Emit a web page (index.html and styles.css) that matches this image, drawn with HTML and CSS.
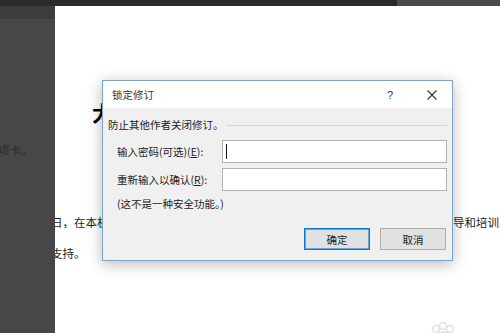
FILE: index.html
```html
<!DOCTYPE html>
<html>
<head>
	<meta charset="utf-8">
	<title>锁定修订</title>
	<link rel="stylesheet" href="styles.css">
</head>
<body>
<div class="screen">
	<div class="topbar">
		<div class="topbar-dark"></div>
		<div class="topbar-light"></div>
	</div>

	<div class="workspace">
		<div class="pane">
			<div class="pane-head"></div>
			<p class="pane-text">项卡。</p>
		</div>

		<div class="page">
			<h1 class="doc-title">大</h1>
			<div class="doc-line">
				<span class="doc-left">日，在本机构中审阅文档时，可以使用修订功能进行指</span>
				<span class="doc-right">导和培训工作</span>
			</div>
			<p class="doc-line doc-last">支持。</p>
			<svg class="watermark" width="40" height="16" viewBox="0 0 40 16">
				<circle cx="14" cy="9" r="3.5"/>
				<circle cx="21" cy="6" r="3.5"/>
				<circle cx="28" cy="9" r="3.5"/>
				<path d="M10 16 Q21 8 32 16"/>
			</svg>
		</div>
	</div>

	<!-- 对话框 -->
	<div class="dialog">
		<div class="dialog-title">
			<span class="title-text">锁定修订</span>
			<span class="help">?</span>
			<svg class="close" width="10" height="10" viewBox="0 0 10 10">
				<path d="M0.5 0.5 L9.5 9.5 M9.5 0.5 L0.5 9.5"/>
			</svg>
		</div>

		<div class="dialog-body">
			<div class="intro">
				<span>防止其他作者关闭修订。</span>
				<span class="intro-rule"></span>
			</div>

			<div class="field">
				<span class="field-label">输入密码(可选)(<u>E</u>):</span>
				<div class="input"><span class="caret"></span></div>
			</div>
			<div class="field field-second">
				<span class="field-label">重新输入以确认(<u>R</u>):</span>
				<div class="input"></div>
			</div>

			<p class="note">(这不是一种安全功能。)</p>

			<div class="buttons">
				<button class="btn btn-primary">确定</button>
				<button class="btn">取消</button>
			</div>
		</div>
	</div>
</div>
</body>
</html>
```

FILE: styles.css
```css
* { box-sizing: border-box; }
body { margin: 0; font-family: "Noto Sans CJK SC", "Liberation Sans", sans-serif; }

.screen { position: relative; width: 500px; height: 333px; overflow: hidden; background: #fff; }

.topbar { display: flex; height: 6px; }
.topbar-dark { width: 397px; background: #2b2b2b; }
.topbar-light { flex: 1; background: #4b4b4b; }

.workspace { display: flex; height: 327px; }
.pane { width: 55px; background: #474747; display: flex; flex-direction: column; overflow: hidden; }
.pane-head { height: 13px; background: #3c3c3c; }
.pane-text { margin: 124px 0 0 -2px; font-size: 11.5px; line-height: 14px; color: #2c2c2c; white-space: nowrap; }

.page { flex: 1; position: relative; overflow: hidden; background: #fff; }
.doc-title { margin: 95px 0 0 37px; font-size: 21px; line-height: 22px; font-weight: bold; color: #000; }
.doc-line { display: flex; margin: 92px 0 0 -4px; font-size: 11.5px; line-height: 14px; color: #1e1e1e; white-space: nowrap; }
.doc-left { flex: none; width: 402px; overflow: hidden; }
.doc-right { flex: none; }
.doc-last { margin-top: 17px; margin-bottom: 0; }
.watermark { position: absolute; right: 38px; bottom: -3px; fill: none; stroke: #e2e2e2; stroke-width: 1.5; }

/* dialog */
.dialog { position: absolute; left: 102px; top: 80px; width: 351px; height: 181px; display: flex; flex-direction: column;
	background: #f0f0f0; border: 1px solid #7ca4c8; box-shadow: 0 3px 14px rgba(0,0,0,0.28); font-size: 10.5px; color: #222; }
.dialog-title { height: 27px; display: flex; align-items: center; padding: 0 15px 0 9px; background: #fff; }
.title-text { flex: 1; color: #333; }
.help { margin-right: 34px; font-family: "Liberation Sans", sans-serif; font-size: 11px; color: #333; }
.close { stroke: #333; stroke-width: 1.1; }

.dialog-body { flex: 1; display: flex; flex-direction: column; padding: 10px 5px 10px 5px; }
.intro { display: flex; align-items: center; line-height: 14px; }
.intro-rule { flex: 1; height: 1px; margin-left: 2px; background: #d5d5d5; }

.field { display: flex; align-items: center; margin-top: 8px; padding-left: 9px; }
.field-second { margin-top: 5px; }
.field-label { width: 105px; }
.input { flex: 1; height: 23px; display: flex; align-items: center; padding-left: 3px; background: #fff; border: 1px solid #b4b4b4; }
.caret { width: 1px; height: 15px; background: #111; }

.note { margin: 6px 0 0; padding-left: 9px; line-height: 14px; }

.buttons { display: flex; justify-content: flex-end; gap: 10px; margin-top: auto; padding-right: 1px; }
.btn { width: 66px; height: 22px; padding: 0; font: inherit; color: #222; background: #e1e1e1; border: 1px solid #adadad; }
.btn-primary { border-color: #0078d7; box-shadow: inset 0 0 0 1px rgba(0,120,215,0.55); }
```
